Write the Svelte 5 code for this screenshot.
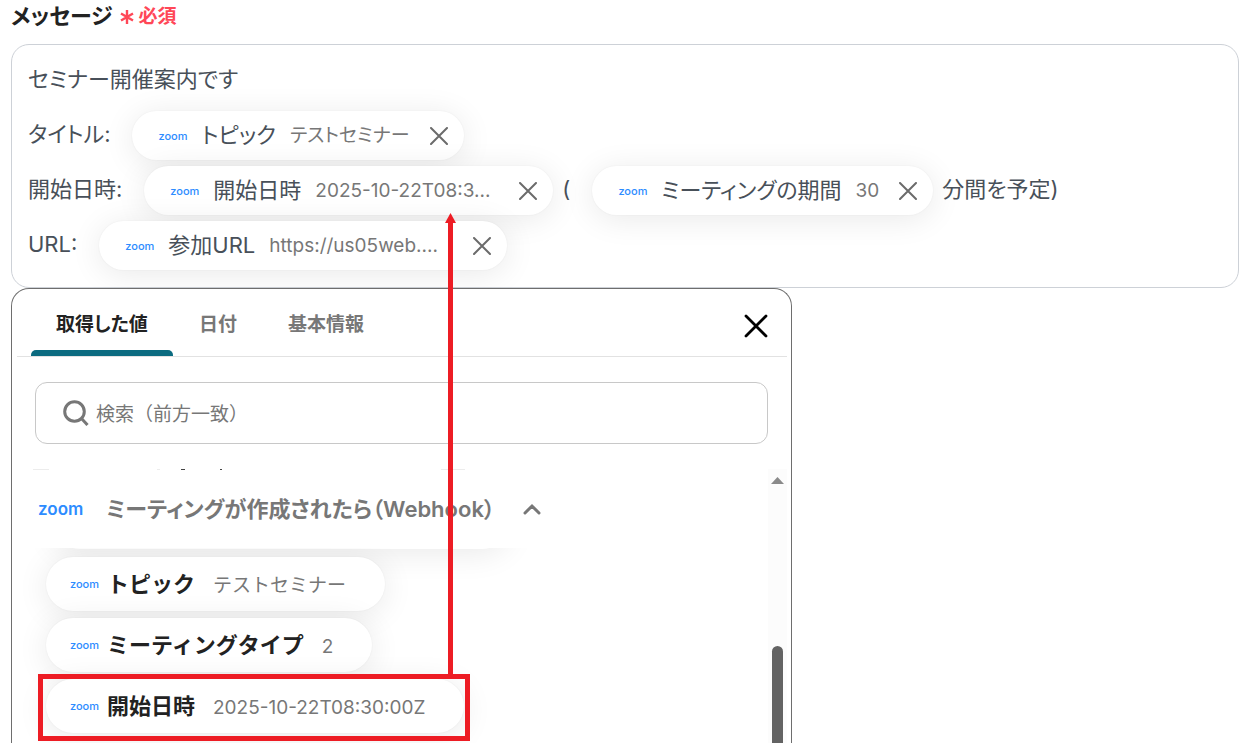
<script>
  const rows = [
    ["セミナー開催案内です"],
    ["タイトル:", { label: "トピック", value: "テストセミナー" }],
    [
      "開始日時:",
      { label: "開始日時", value: "2025-10-22T08:3...", long: true },
      "(",
      { label: "ミーティングの期間", value: "30" },
      "分間を予定)"
    ],
    ["URL:", { label: "参加URL", value: "https://us05web....", long: true }]
  ];

  const tabs = ["取得した値", "日付", "基本情報"];
  let activeTab = $state("取得した値");
  let keyword = $state("");
  let expanded = $state(true);

  const outputs = [
    { label: "トピック", value: "テストセミナー" },
    { label: "ミーティングタイプ", value: "2" },
    { label: "開始日時", value: "2025-10-22T08:30:00Z" }
  ];
</script>

<div class="page">
  <div class="field-title" id="message-label">
    <strong>メッセージ</strong>
    <span class="required">
      <svg width="14" height="16" viewBox="0 0 14 16" aria-hidden="true">
        <path d="M7 1v14M1 4.5l12 7M13 4.5l-12 7" />
      </svg>
      必須
    </span>
  </div>

  <div class="editor" role="group" aria-labelledby="message-label">
    {#each rows as row}
      <div class="row">
        {#each row as part}
          {#if typeof part === "string"}
            <span class="plain">{part}</span>
          {:else}
            <span class="chip">
              <span class="zoom">zoom</span>
              <span class="chip-label">{part.label}</span>
              <span class="value" class:long={part.long}>{part.value}</span>
              <button class="remove" aria-label="削除">
                <svg width="18" height="18" viewBox="0 0 18 18"><path d="M1 1l16 16M17 1L1 17" /></svg>
              </button>
            </span>
          {/if}
        {/each}
      </div>
    {/each}
  </div>

  <section class="panel">
    <div class="panel-head">
      <div class="tabs" role="tablist">
        {#each tabs as tab}
          <button role="tab" aria-selected={activeTab === tab} class:active={activeTab === tab} onclick={() => (activeTab = tab)}>
            {tab}
          </button>
        {/each}
      </div>
      <button class="close" aria-label="閉じる">
        <svg width="24" height="24" viewBox="0 0 24 24"><path d="M2 2l20 20M22 2L2 22" /></svg>
      </button>
    </div>

    <label class="search">
      <svg width="26" height="26" viewBox="0 0 26 26" aria-hidden="true">
        <circle cx="11.5" cy="11.5" r="9.8" />
        <path d="M18.5 18.5L24.5 25" />
      </svg>
      <input type="text" aria-label="検索" placeholder="検索（前方一致）" bind:value={keyword} />
    </label>

    <div class="results">
      <!-- edge of the item scrolled under the group header -->
      <svg class="scrolled" width="450" height="1" viewBox="0 0 450 1" aria-hidden="true">
        <path class="faint" d="M15 .5h16M139 .5h3M423 .5h24" />
        <path d="M163 .5h4M202 .5h2" />
      </svg>
      <div class="scroll">
        <button class="group" aria-expanded={expanded} onclick={() => (expanded = !expanded)}>
          <span class="zoom large">zoom</span>
          <span>ミーティングが作成されたら（Webhook）</span>
          <svg class="chevron" width="18" height="12" viewBox="0 0 18 12"><path d="M2 10l7-7 7 7" /></svg>
        </button>
        {#if expanded}
          <div class="outputs">
            {#each outputs as item}
              <button class="pill">
                <span class="zoom">zoom</span>
                <span class="pill-label">{item.label}</span>
                <span class="value">{item.value}</span>
              </button>
            {/each}
          </div>
        {/if}
      </div>
      <div class="scrollbar" aria-hidden="true">
        <svg width="13" height="7" viewBox="0 0 13 7"><path d="M6.5 0L13 7H0z" /></svg>
        <div class="thumb"></div>
      </div>
    </div>
  </section>

  <svg class="callout" width="432" height="528" viewBox="0 0 432 528" aria-hidden="true">
    <rect x="2.5" y="463.5" width="427" height="62" />
    <path class="line" d="M412.5 8v455" />
    <path class="head" d="M412.5 0l5.5 10h-11z" />
  </svg>
</div>

<style>
  :global(body) {
    margin: 0;
    background: #fff;
  }

  .page {
    position: relative;
    box-sizing: border-box;
    height: 100vh;
    padding: 0 8px 2px 11px;
    display: flex;
    flex-direction: column;
    overflow: hidden;
    color: #485059;
    font-family: Inter, "Noto Sans CJK JP", sans-serif;
    font-size: 22px;
    line-height: 32px;
    font-feature-settings: "palt";
  }

  button {
    font: inherit;
    font-feature-settings: inherit;
    color: inherit;
    background: none;
    border: none;
    padding: 0;
    cursor: pointer;
  }

  svg {
    display: block;
    flex: none;
    fill: none;
    stroke: currentColor;
  }

  .field-title {
    display: flex;
    align-items: center;
    gap: 7px;
    height: 32px;
    margin-bottom: 12px;
    color: #222;
  }

  .required {
    display: flex;
    align-items: center;
    gap: 5px;
    padding-top: 2px;
    color: #ff4757;
    font-size: 19px;
    font-weight: 600;
  }

  .required svg {
    stroke-width: 2.4;
  }

  .editor {
    display: flex;
    flex-direction: column;
    gap: 6px;
    padding: 11px 16px 17px;
    border: 1px solid #cdd1d7;
    border-radius: 18px;
  }

  .row {
    display: flex;
    align-items: center;
    height: 49px;
    white-space: nowrap;
  }

  .plain {
    padding-bottom: 3px;
  }

  .plain + .chip {
    margin-left: 22px;
  }

  .chip + .plain {
    margin-left: 9px;
  }

  .chip,
  .pill {
    display: flex;
    align-items: center;
    box-sizing: border-box;
    background: #fff;
    border-radius: 28px;
    box-shadow: 0 4px 32px rgba(0, 0, 0, 0.09), 0 0 2px rgba(0, 0, 0, 0.06);
    white-space: nowrap;
  }

  .chip {
    height: 49px;
    padding: 0 16px 0 26px;
  }

  .zoom {
    flex: none;
    width: 28px;
    color: #2d8cff;
    font-family: Inter, sans-serif;
    font-size: 11px;
    font-weight: 500;
  }

  .zoom.large {
    width: 45px;
    font-size: 17px;
    font-weight: 600;
  }

  .chip-label {
    margin: 0 14px 0 15px;
    padding-bottom: 2px;
  }

  .value {
    color: #777;
    font-size: 19px;
  }

  .value.long {
    width: 184px;
  }

  .remove {
    margin-left: 20px;
    color: #6b6b6b;
  }

  .remove svg {
    stroke-width: 2;
    stroke-linecap: round;
  }

  .panel {
    position: relative;
    box-sizing: border-box;
    flex: 1;
    min-height: 0;
    width: 100%;
    max-width: 781px;
    padding: 0 4px 0 5px;
    display: flex;
    flex-direction: column;
    background: #fff;
    border: 1px solid #6e6e6e;
    border-bottom: none;
    border-radius: 18px 18px 0 0;
  }

  .panel-head {
    display: flex;
    align-items: center;
    justify-content: space-between;
    flex: none;
    height: 67px;
    padding: 0 19px 0 14px;
    border-bottom: 1px solid #e2e2e2;
  }

  .tabs {
    display: flex;
    gap: 1px;
    height: 100%;
  }

  .tabs button {
    box-sizing: border-box;
    padding: 10px 25px 0;
    border-bottom: 6px solid transparent;
    color: #777;
    font-size: 19px;
    font-weight: 600;
    position: relative;
  }

  .tabs button.active {
    color: #222;
  }

  .tabs button.active::after {
    content: "";
    position: absolute;
    left: 0;
    right: 0;
    bottom: -6px;
    height: 6px;
    background: #0b6b80;
    border-radius: 5px 5px 0 0;
  }

  .close {
    color: #000;
    padding-top: 6px;
  }

  .close svg {
    stroke-width: 2.8;
    stroke-linecap: round;
  }

  .search {
    display: flex;
    align-items: center;
    gap: 7px;
    box-sizing: border-box;
    flex: none;
    height: 62px;
    margin: 25px 19px 25px 18px;
    padding: 0 27px;
    border: 1px solid #c8c8c8;
    border-radius: 12px;
    color: #777;
  }

  .search svg {
    stroke-width: 3;
  }

  .search input {
    flex: 1;
    min-width: 0;
    border: none;
    outline: none;
    padding: 2px 0 0;
    background: none;
    color: #222;
    font-family: inherit;
    font-size: 19px;
  }

  .search input::placeholder {
    color: #777;
  }

  .results {
    position: relative;
    display: flex;
    flex: 1;
    min-height: 0;
  }

  .scrolled {
    position: absolute;
    left: 1px;
    top: 0;
    color: #444;
  }

  .scrolled .faint {
    stroke: #ececec;
  }

  .scroll {
    flex: 1;
    min-width: 0;
    display: flex;
    flex-direction: column;
    overflow: hidden;
  }

  .group {
    display: flex;
    align-items: center;
    flex: none;
    height: 79px;
    padding: 0 21px;
    color: #777;
    font-weight: 600;
    white-space: nowrap;
  }

  .group .zoom {
    margin-right: 23px;
  }

  .chevron {
    margin-left: 28px;
    stroke-width: 3;
    stroke-linecap: round;
  }

  .outputs {
    position: relative;
    flex: 1;
    display: flex;
    flex-direction: column;
    align-items: flex-start;
    gap: 7px;
    padding: 9px 0 0 29px;
    overflow: hidden;
    font-feature-settings: normal;
  }

  /* shadow of the group header, cast on the list only */
  .outputs::before {
    content: "";
    position: absolute;
    left: 36px;
    top: -53px;
    width: 456px;
    height: 54px;
    border-radius: 28px;
    box-shadow: 0 4px 32px rgba(0, 0, 0, 0.09);
  }

  .pill {
    position: relative;
    flex: none;
    height: 54px;
    padding: 0 39px 0 24px;
  }

  .pill-label {
    margin: 0 18px 0 9px;
    color: #222;
    font-weight: 600;
  }

  .pill .value {
    padding-top: 3px;
  }

  .scrollbar {
    display: flex;
    flex-direction: column;
    align-items: center;
    width: 19px;
    padding-top: 8px;
    background: #fcfcfc;
  }

  .scrollbar svg {
    fill: #8a8a8a;
    stroke: none;
  }

  .thumb {
    flex: 1;
    width: 11px;
    margin-top: 162px;
    background: #636363;
    border-radius: 6px 6px 0 0;
  }

  .callout {
    position: absolute;
    left: 38px;
    top: 213px;
    stroke: #ed1c24;
    stroke-width: 5;
    pointer-events: none;
  }

  .callout .head {
    fill: #ed1c24;
    stroke: none;
  }
</style>
